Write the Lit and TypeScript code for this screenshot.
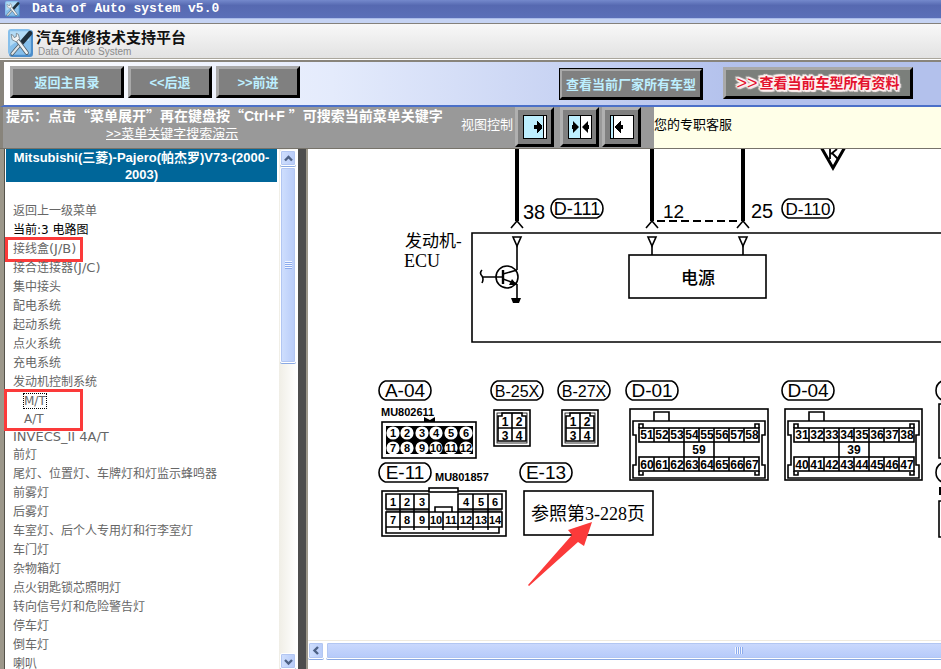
import { LitElement, html, css, svg } from "lit";
import { customElement } from "lit/decorators.js";
import { classMap } from "lit/directives/class-map.js";

const toolsIcon = html`<svg viewBox="0 0 24 26" preserveAspectRatio="none" aria-hidden="true">
  <rect x="1" y="1" width="23" height="25" rx="3" fill="#4c8ecb"/>
  <rect x="0" y="0" width="22" height="24" rx="3" fill="#86bfeb"/>
  <path d="M2 2h18v9q-9-2-18 5z" fill="#b4dcf6"/>
  <path d="M12 14 L21 4" stroke="#20303c" stroke-width="4.4" stroke-linecap="round" fill="none"/>
  <path d="M4 23 L12 14" stroke="#4b5963" stroke-width="3.4" stroke-linecap="round"/>
  <path d="M4 23 L12 14" stroke="#dfe5e8" stroke-width="2" stroke-linecap="round"/>
  <path d="M8 9 L18 22" stroke="#55616b" stroke-width="4" stroke-linecap="round"/>
  <path d="M8 9 L18 22" stroke="#f0f3f4" stroke-width="2.4" stroke-linecap="round"/>
  <path d="M3 5 L4 10 L8 12 L11 9 L10 5 L8 4 L8 7 L6 8 L5 6Z" fill="#f2f4f4" stroke="#65727c" stroke-width=".7"/>
</svg>`;

const chevron = (d: string) => html`<svg viewBox="0 0 9 9" width="9" height="9" aria-hidden="true">
  <path d=${d} fill="none" stroke="#4d6185" stroke-width="2.4"/></svg>`;

const tag = (x: number, y: number, text: string, size: number) => svg`
  <path class="line" d="M${x + 6} ${y}H${x + 46}M${x + 6} ${y + 19}H${x + 46}" stroke-width="1.4"/>
  <path class="line" d="M${x + 6} ${y}C${x - 2} ${y + 4} ${x - 2} ${y + 15} ${x + 6} ${y + 19}M${x + 46} ${y}C${x + 54} ${y + 4} ${x + 54} ${y + 15} ${x + 46} ${y + 19}"/>
  <text class="sans" x=${x + 26} y=${y + 16} font-size=${size} text-anchor="middle">${text}</text>`;

const pin = (x: number) => svg`
  <path d="M${x} 149V221" stroke="#000" stroke-width="4"/>
  <path class="line" d="M${x - 6} 228l6-7 6 7" stroke-width="2"/>
  <path class="line" d="M${x - 4} 237h8l-4 9z" stroke-width="1.8"/>`;

const num = (x: number, y: number, n: number | string, size = 12) => svg`
  <text class="num" x=${x} y=${y} font-size=${size} text-anchor="middle">${n}</text>`;

const smallConnector = (x: number) => svg`
  <rect class="line" x=${x} y="410" width="36" height="36"/>
  <rect class="thin" x=${x + 3} y="413" width="30" height="30"/>
  <path class="line" d="M${x + 4} 416h4v-3h20v3h4v25h-28zM${x + 18} 413v28M${x + 4} 428h28"/>
  ${num(x + 11, 426, 1)}${num(x + 25, 426, 2)}${num(x + 11, 440, 3)}${num(x + 25, 440, 4)}`;

const eight = [0, 1, 2, 3, 4, 5, 6, 7];

const wideConnector = (x: number, width: number, first: number, middle: number, second: number) => svg`
  <rect class="line" x=${x} y="409" width=${width} height="71"/>
  <path class="line" d="M${x + 24} 421v-9h15v9"/>
  <path class="line" d="M${x + 3} 421h${width - 6}v14h-3v30h3v13h${6 - width}v-13h3v-30h-3z"/>
  <path class="line" d="M${x + 9} 428v-4h4v4M${x + 125} 428v-4h4v4M${x + 9} 471v4h4v-3M${x + 125} 472v3h4v-4"/>
  <rect class="line" x=${x + 9} y="428" width="120" height="14"/>
  <rect class="line" x=${x + 9} y="457" width="120" height="14"/>
  <path class="line" d="M${x + 54} 442v15M${x + 84} 442v15"/>
  ${eight.slice(1).map((i) => svg`<path class="line" d="M${x + 9 + i * 15} 428v14m0 15v14"/>`)}
  ${eight.map((i) => svg`${num(x + 17 + i * 15, 439, first + i, 12)}${num(x + 17 + i * 15, 469, second + i, 12)}`)}
  ${num(x + 69, 454, middle, 12)}`;

interface Item { text: string; code?: string; kind?: string; children?: Item[]; }

const menu: Item[] = [
  { text: "返回上一级菜单" },
  { text: "当前:3 电路图", kind: "current" },
  { text: "接线盒", code: "(J/B)", kind: "marked" },
  { text: "接合连接器", code: "(J/C)" },
  { text: "集中接头" },
  { text: "配电系统" },
  { text: "起动系统" },
  { text: "点火系统" },
  { text: "充电系统" },
  { text: "发动机控制系统", children: [{ text: "M/T", kind: "focused" }, { text: "A/T" }] },
  { text: "", code: "INVECS_II 4A/T", kind: "latin" },
  { text: "前灯" },
  { text: "尾灯、位置灯、车牌灯和灯监示蜂鸣器" },
  { text: "前雾灯" },
  { text: "后雾灯" },
  { text: "车室灯、后个人专用灯和行李室灯" },
  { text: "车门灯" },
  { text: "杂物箱灯" },
  { text: "点火钥匙锁芯照明灯" },
  { text: "转向信号灯和危险警告灯" },
  { text: "停车灯" },
  { text: "倒车灯" },
  { text: "喇叭" },
];

@customElement("wiring-diagram")
export class WiringDiagram extends LitElement {
  static styles = css`
    :host { display: block; }
    svg { display: block; }
    .line { fill: none; stroke: #000; stroke-width: 1.6; }
    .thin { fill: none; stroke: #000; stroke-width: 0.8; }
    .sans { font-family: "Liberation Sans", sans-serif; }
    .num { font-family: "Liberation Sans", sans-serif; font-weight: 700; }
    .zh { font-family: "Liberation Serif", "Noto Sans CJK SC", serif; }
  `;

  render() {
    const circles = [393, 407, 422, 436, 451, 466];
    return html`<svg width="700" height="491" viewBox="308 149 700 491" role="img" aria-label="电路图" lang="zh-CN">
      ${[517, 652, 743].map(pin)}
      <text class="sans" x="523" y="219" font-size="20">38</text>
      <text class="sans" x="663" y="218" font-size="19">12</text>
      <text class="sans" x="751" y="218" font-size="20">25</text>
      ${tag(551, 199, "D-111", 18)}${tag(782, 199, "D-110", 17)}
      <path d="M657 221H740" stroke="#000" stroke-width="2" stroke-dasharray="8 4"/>
      <path d="M821 147l12 21 12-21" fill="none" stroke="#000" stroke-width="3"/>
      <path d="M830 149v10M832 153l6 6M831 154l6-5" fill="none" stroke="#000" stroke-width="1.8"/>

      <path class="line" d="M1008 233H472V342H1008"/>
      <path class="line" d="M517 246V270M517 284V298M652 246V255M743 246V255"/>
      <circle class="line" cx="507" cy="277" r="11" stroke-width="2"/>
      <path class="line" d="M483 277H503M482 270q-3 3 0 6q2 3 0 7M503 274L517 270M503 279L517 284"/>
      <path d="M503 270V284" stroke="#000" stroke-width="2.4"/>
      <path d="M509 285l8 0-5-6zM511 298h10l-2 5h-6z" fill="#000"/>
      <rect class="line" x="629" y="255" width="137" height="43"/>
      <text class="zh" x="698" y="284" font-size="17" font-weight="500" text-anchor="middle">电源</text>
      <text class="zh" x="405" y="247" font-size="17">发动机-</text>
      <text class="zh" x="404" y="267" font-size="18">ECU</text>

      ${tag(379, 381, "A-04", 19)}${tag(491, 381, "B-25X", 16)}${tag(558, 381, "B-27X", 16)}
      ${tag(626, 381, "D-01", 19)}${tag(782, 381, "D-04", 19)}
      ${tag(379, 463, "E-11", 19)}${tag(520, 463, "E-13", 19)}
      ${tag(936, 381, "", 19)}${tag(936, 463, "", 19)}
      <text class="num" x="381" y="416" font-size="11">MU802611</text>
      <text class="num" x="435" y="481" font-size="11">MU801857</text>

      <path d="M424 417l6 3 5-3v5h-11z" fill="#000"/>
      <rect class="line" x="382" y="422" width="94" height="36"/>
      <rect x="386" y="426" width="87" height="28" fill="#000"/>
      ${circles.map((x, i) => svg`
        <circle cx=${x} cy="433" r="6.6" fill="#fff"/><circle cx=${x} cy="448" r="6.6" fill="#fff"/>
        ${num(x, 437, i + 1, 11)}${num(x, 452, i + 7, 11)}`)}
      ${smallConnector(494)}${smallConnector(562)}
      ${wideConnector(630, 138, 51, 59, 60)}${wideConnector(785, 137, 31, 39, 40)}

      <rect class="line" x="382" y="491" width="124" height="45"/>
      <rect x="429" y="488" width="29" height="4" fill="#fff" stroke="#000" stroke-width="1.6"/>
      <path d="M386 510.500H429M458 510.500H502" stroke="#777" stroke-width="3"/>
      <path class="line" d="M429 509H386V494H429V512M458 512V494H502V509H458M400 494V527M414 494V527M473 494V527M488 494V527M435 512V507H452V512M386 512H502V527H386zM429 512V527M443 512V527M458 512V527M386 527V533H499V527M400 527V530M414 527V530M429 527V530M443 527V530M458 527V530M473 527V530M488 527V530"/>
      ${[393, 407, 422, 466, 481, 495].map((x, i) => num(x, 506, i + 1, 11))}
      ${[393, 407, 422, 436, 451, 466, 481, 495].map((x, i) => num(x, 524, i + 7, 11))}

      <rect class="line" x="524" y="491" width="129" height="44"/>
      <text class="zh" x="588" y="520" font-size="18" text-anchor="middle">参照第3-228页</text>
      <path class="line" d="M1008 404H939V458H1008M1008 501H939V537H1008"/>
      <path d="M939 487h10v8h-10z" fill="#000"/>
      <path d="M592 522L568 530 572 535 528 585 529 586 578 542 584 546z" fill="#fb3a3a"/>
    </svg>`;
  }
}

@customElement("app-root")
export class AppRoot extends LitElement {
  static styles = css`
    :host {
      display: flex; flex-direction: column; height: 100vh; overflow: hidden;
      background: #fff; color: #000;
      font: 13px/17px "Liberation Sans", "Noto Sans CJK SC", sans-serif;
    }
    *, *::after { box-sizing: border-box; }
    button { padding: 0; margin: 0; font: inherit; cursor: pointer; flex: none; }
    h1, h2, p, ul { margin: 0; padding: 0; }

    .title {
      display: flex; align-items: center; gap: 12px; flex: none; height: 18px; padding-left: 5px;
      background: linear-gradient(#7489cc, #5669b1 30%, #5b6fb8); color: #fff;
      font: 700 13px/18px "Liberation Mono", monospace;
    }
    .title svg { width: 15px; height: 16px; }
    .strip { flex: none; height: 5px; background: #c5d3f3; border-top: 1px solid #a9bbe9; }
    .brand {
      display: flex; gap: 3px; flex: none; height: 36px; padding: 3px 0 0 8px;
      border-top: 1px solid #84817b; border-bottom: 1px solid #aaa69c;
      background: linear-gradient(#f8f8f8, #e2e2e2);
    }
    .brand svg { width: 25px; height: 28px; margin-top: 2px; }
    .brand h1 { font: 700 15px/20px "Noto Sans CJK SC", sans-serif; color: #111; }
    .brand p { font-size: 10px; line-height: 10px; color: #8b8b8b; padding-left: 2px; }

    .toolbar {
      display: flex; gap: 4px; flex: none; height: 47px; padding: 4px 28px 0 6px; margin-top: 1px;
      border-top: 2px solid #88847b; border-left: 4px solid #88847b; border-bottom: 2px solid #4b70c8;
      background: linear-gradient(90deg, #fff, #e4ebfc 35%, #b3c1ec 78%, #b3c1ec);
    }
    .push {
      width: 84px; height: 32px; background: #808080; color: #bdefff; font-weight: 700;
      border: 3px solid; border-color: #a9a9a9 #000 #000 #a9a9a9; white-space: nowrap;
    }
    .home { width: 114px; }
    .maker { width: 144px; margin: 2px 16px 0 auto; outline: 1px solid #000; outline-offset: -1px; }
    .all {
      display: flex; align-items: center; justify-content: center; gap: 2px;
      width: 190px; margin-top: 1px; color: #e3122e; font-size: 14px; background: #7b7f7b;
      text-shadow: 2px 0 1px #fff0f0, -2px 0 1px #fff0f0, 0 2px 1px #fff0f0, 0 -2px 1px #fff0f0,
        1px 1px 1px #fff, -1px 1px 1px #fff, 1px -1px 1px #fff, -1px -1px 1px #fff,
        2px 2px 1px #fff0f0, -2px -2px 1px #fff0f0;
    }
    .arrows { font-size: 18px; font-weight: 400; }

    .tips { display: flex; flex: none; height: 41px; background: #999; color: #fff; border-left: 3px solid #88847b; }
    .hint { width: 458px; padding-left: 3px; white-space: nowrap; flex: none; }
    .hint p { font: 700 14px/17px "Noto Sans CJK SC", sans-serif; }
    kbd { font-family: "Liberation Sans", sans-serif; }
    .hint a { color: #fff; margin-left: 100px; }
    .view { display: flex; align-items: flex-start; flex: none; width: 193px; }
    .view span { line-height: 36px; margin-right: 2px; }
    .icon {
      display: grid; place-items: center; width: 39px; height: 40px; background: #808080;
      border: 3px solid; border-color: #b0b0b0 #000 #000 #b0b0b0;
    }
    .icon + .icon { margin-left: 6px; }
    .icon + .icon + .icon { margin-left: 3px; }
    .service { flex: 1; background: #ffffe8; color: #000; line-height: 36px; }

    .frames { display: flex; flex: 1; min-height: 0; border-top: 1px solid #77736a; }
    .side { display: flex; flex: none; width: 298px; border-left: 4px solid #9c978a; box-shadow: inset 1px 0 #55524a; }
    nav { flex: 1; overflow: hidden; padding: 0 2px; }
    h2 {
      background: #069; color: #fff; text-align: center; font-size: 13px; line-height: 17px;
      height: 33px; font-weight: 700; padding: 0 4px; margin-bottom: 20px;
    }
    ul { list-style: none; }
    li a, li > span {
      display: block; width: max-content; color: #666; text-decoration: none;
      font: 12px/19px "DejaVu Sans", "Noto Sans CJK SC", sans-serif;
    }
    .code { font-size: 13px; line-height: 12px; }
    .list { padding-left: 7px; }
    .list .current > span { color: #000; }
    li, .sub { position: relative; }
    .sub { display: flow-root; padding-left: 11px; }
    .sub a, .latin a { line-height: 18px; }
    .focused a { line-height: 14px; margin: 2px 0; outline: 1px dotted #000; }
    .marked::after, .sub::after {
      content: ""; position: absolute; border: 3px solid #fb3a3a; pointer-events: none;
      left: -8px; top: -3px; width: 78px; height: 25px;
    }
    .sub::after { left: -9px; top: -3px; width: 79px; height: 42px; }

    .vbar {
      display: flex; flex-direction: column; gap: 1px; flex: none; width: 18px; padding: 1px 1px 0;
      margin-right: 1px; background: linear-gradient(90deg, #f0eee6, #fff);
    }
    .knob, .thumb {
      display: grid; place-items: center; border: 1px solid #fff; border-radius: 2px;
      background: linear-gradient(90deg, #d0dffd, #b7cbf9); box-shadow: inset 0 0 0 1px #b2c6f2, 0 1px #8aa9e3;
    }
    .knob { width: 16px; height: 16px; }
    .vbar .thumb { height: 196px; }
    .vbar .knob:last-child { margin-top: auto; }
    .grip { width: 7px; height: 8px; background: repeating-linear-gradient(#f2f6ff 0 1px, #8cabed 1px 2px); }
    .divider { flex: none; width: 10px; background: #4d4d4d; border-right: 2px solid #9c978a; }
    .main { display: flex; flex-direction: column; flex: 1; min-width: 0; overflow: hidden; padding-bottom: 8px; }
    wiring-diagram { flex: 1; min-height: 0; overflow: hidden; }
    .hbar { display: flex; flex: none; gap: 2px; height: 21px; padding: 1px 0 2px; border-top: 1px solid #efeadf; }
    .hbar .knob { height: 17px; }
    .hbar .thumb { flex: none; width: 826px; height: 17px; background: linear-gradient(#cbd9fd, #b5cafa); }
    .hbar .grip { width: 8px; height: 7px; background: repeating-linear-gradient(90deg, #f2f6ff 0 1px, #8cabed 1px 2px); }
  `;

  private item(i: Item): unknown {
    return html`<li class=${classMap({ [i.kind ?? "plain"]: true })}>
      ${i.kind === "current"
        ? html`<span aria-current="page">${i.text}</span>`
        : html`<a href="#">${i.text}${i.code ? html`<span class="code">${i.code}</span>` : ""}</a>`}
      ${i.children ? html`<ul class="sub">${i.children.map((c) => this.item(c))}</ul>` : ""}
    </li>`;
  }

  private paneIcon(split: number, arrows: string) {
    return html`<svg width="24" height="24" viewBox="0 0 24 24" aria-hidden="true">
      <rect x=".5" y=".5" width="23" height="23" fill="#fff" stroke="#000"/>
      <rect x="1" y="1" width=${split - 1} height="22" fill="#bdefff"/>
      <path d="M${split + 0.5} 1V23" stroke="#000"/><path d=${arrows}/>
    </svg>`;
  }

  render() {
    return html`
      <div class="title">${toolsIcon}<span>Data of Auto system v5.0</span></div>
      <div class="strip"></div>
      <header class="brand">${toolsIcon}<div><h1 lang="zh-CN">汽车维修技术支持平台</h1><p>Data Of Auto System</p></div></header>
      <div class="toolbar" lang="zh-CN">
        <button class="push home">返回主目录</button>
        <button class="push">&lt;&lt;后退</button>
        <button class="push">&gt;&gt;前进</button>
        <button class="push maker">查看当前厂家所有车型</button>
        <button class="push all"><span class="arrows">&gt;&gt;</span><span>查看当前车型所有资料</span></button>
      </div>
      <div class="tips" lang="zh-CN">
        <div class="hint">
          <p>提示：点击“菜单展开”再在键盘按“<kbd>Ctrl+F </kbd>”可搜索当前菜单关键字</p>
          <a href="#">&gt;&gt;菜单关键字搜索演示</a>
        </div>
        <div class="view">
          <span>视图控制</span>
          <button class="icon" aria-label="展开菜单">${this.paneIcon(20, "M11 10h3V6h1v1h1v1h1v1h1v1h1v4h-1v1h-1v1h-1v1h-1v1h-1v-4h-3z")}</button>
          <button class="icon" aria-label="平分视图">${this.paneIcon(12, "M4 10h1V6l6 6-6 6v-4H4zM21 10h-1V6l-6 6 6 6v-4h1z")}</button>
          <button class="icon" aria-label="收起菜单">${this.paneIcon(3, "M13 10h-2V6h-1v1H9v1H8v1H7v1H6v1H5v2h1v1h1v1h1v1h1v1h1v1h1v-4h2z")}</button>
        </div>
        <div class="service">您的专职客服</div>
      </div>
      <div class="frames">
        <aside class="side" lang="zh-CN">
          <nav>
            <h2>Mitsubishi(三菱)-Pajero(帕杰罗)V73-(2000-2003)</h2>
            <ul class="list">${menu.map((i) => this.item(i))}</ul>
          </nav>
          <div class="vbar">
            <button class="knob" aria-label="向上滚动">${chevron("M1 6.500L4.500 3 8 6.500")}</button>
            <div class="thumb"><div class="grip"></div></div>
            <button class="knob" aria-label="向下滚动">${chevron("M1 3L4.500 6.500 8 3")}</button>
          </div>
        </aside>
        <div class="divider"></div>
        <main class="main">
          <wiring-diagram></wiring-diagram>
          <div class="hbar">
            <button class="knob" aria-label="向左滚动">${chevron("M6 1L2.500 4.500 6 8")}</button>
            <div class="thumb"><div class="grip"></div></div>
          </div>
        </main>
      </div>`;
  }
}
